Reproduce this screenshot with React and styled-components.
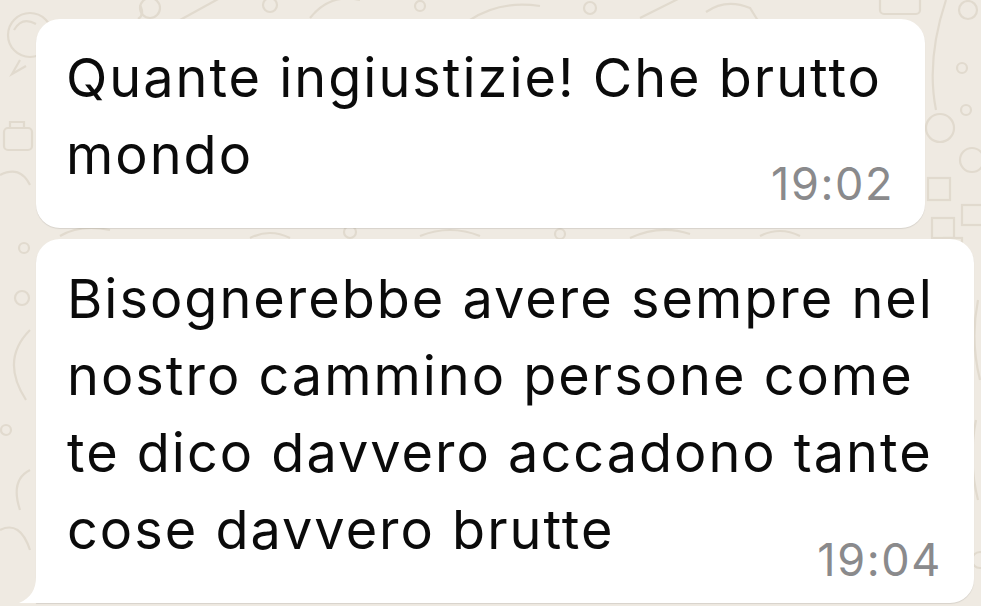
import React from "react";
import styled, { createGlobalStyle } from "styled-components";

const Global = createGlobalStyle`
  html, body { margin: 0; padding: 0; }
  body {
    background: #efeae2;
    font-family: Inter, "Noto Sans", "Liberation Sans", sans-serif;
    -webkit-font-smoothing: antialiased;
  }
`;

const Screen = styled.div`
  position: relative;
  width: 981px;
  height: 606px;
  overflow: hidden;
  background: #efeae2;
`;

const Doodles = styled.svg`
  position: absolute;
  inset: 0;
  width: 100%;
  height: 100%;
  pointer-events: none;
`;

const Chat = styled.div`
  position: relative;
  display: flex;
  flex-direction: column;
  align-items: flex-start;
  gap: 11px;
  padding: 19px 0 0 36px;
`;

const Bubble = styled.div`
  position: relative;
  box-sizing: border-box;
  width: ${(p) => p.$w}px;
  background: #ffffff;
  border-radius: ${(p) => (p.$tail ? "24px 24px 24px 0" : "24px")};
  padding: ${(p) => p.$pad};
  box-shadow: 0 1px 1px rgba(0, 0, 0, 0.1);
`;

const Text = styled.div`
  font-size: 54px;
  line-height: 77px;
  color: #0b0b0b;
  letter-spacing: 2px;
  white-space: nowrap;
`;

const Time = styled.div`
  text-align: right;
  font-size: 45px;
  line-height: 50px;
  color: #8a8a8c;
  margin-top: ${(p) => p.$mt}px;
  letter-spacing: 1.6px;
`;

const Tail = styled.svg`
  position: absolute;
  left: -17px;
  bottom: 0;
  width: 30px;
  height: 26px;
`;

export default function App() {
  return (
    <Screen>
      <Global />
      <Doodles viewBox="0 0 981 606" fill="none" stroke="#e1dace" strokeWidth="2.2">
        <circle cx="30" cy="35" r="22" />
        <path d="M14 30 q8 -14 22 -6" />
        <path d="M20 60 l-8 14 l14 -8" />
        <circle cx="150" cy="8" r="10" />
        <path d="M140 5 q5 10 -2 14" />
        <path d="M180 20 l40 -22" />
        <circle cx="270" cy="5" r="7" />
        <path d="M310 18 q20 -25 50 -18" />
        <circle cx="420" cy="6" r="5" />
        <path d="M470 20 q30 -20 70 -14" />
        <circle cx="590" cy="8" r="6" />
        <path d="M640 18 l40 -20" />
        <path d="M706 12 q20 -14 44 -4 l10 16" />
        <rect x="880" y="-8" width="40" height="22" rx="4" />
        <circle cx="968" cy="10" r="9" />
        <circle cx="962" cy="68" r="5" />
        <circle cx="966" cy="110" r="5" />
        <circle cx="940" cy="128" r="14" />
        <circle cx="972" cy="160" r="12" />
        <rect x="928" y="178" width="22" height="22" />
        <rect x="962" y="205" width="22" height="20" />
        <rect x="932" y="218" width="22" height="20" />
        <path d="M946 0 q-20 60 -10 110" />
        <rect x="4" y="128" width="28" height="22" rx="4" />
        <path d="M10 128 v-6 h14 v6" />
        <path d="M0 175 q20 -10 30 10" />
        <circle cx="24" cy="248" r="5" />
        <circle cx="22" cy="298" r="7" />
        <path d="M30 330 q-30 30 -4 70" />
        <circle cx="6" cy="430" r="5" />
        <path d="M30 470 q-20 10 -10 40" />
        <path d="M0 530 q20 -10 30 20" />
        <path d="M60 236 q20 -12 50 -6" />
        <path d="M250 238 q20 -10 40 0" />
        <circle cx="350" cy="232" r="6" />
        <path d="M420 236 q30 -12 60 0" />
        <circle cx="560" cy="234" r="5" />
        <path d="M630 238 q30 -14 60 -4" />
        <path d="M760 236 q20 -10 40 0" />
        <rect x="944" y="238" width="18" height="18" />
        <path d="M978 300 q-8 40 2 80" />
        <path d="M976 420 q-8 40 2 80" />
        <circle cx="980" cy="560" r="8" />
      </Doodles>
      <Chat>
        <Bubble $w={889} $pad="20px 31px 19px 30px">
          <Text>
            Quante ingiustizie! Che brutto
            <br />
            mondo
          </Text>
          <Time $mt={-34}>19:02</Time>
        </Bubble>
        <Bubble $w={938} $tail $pad="21px 32px 18px 31px">
          <Text>
            Bisognerebbe avere sempre nel
            <br />
            nostro cammino persone come
            <br />
            te dico davvero accadono tante
            <br />
            cose davvero brutte
          </Text>
          <Time $mt={-33}>19:04</Time>
          <Tail viewBox="0 0 30 26">
            <path d="M17 0 C17 12 12 21 0 26 L30 26 L30 0 Z" fill="#ffffff" />
          </Tail>
        </Bubble>
      </Chat>
    </Screen>
  );
}
